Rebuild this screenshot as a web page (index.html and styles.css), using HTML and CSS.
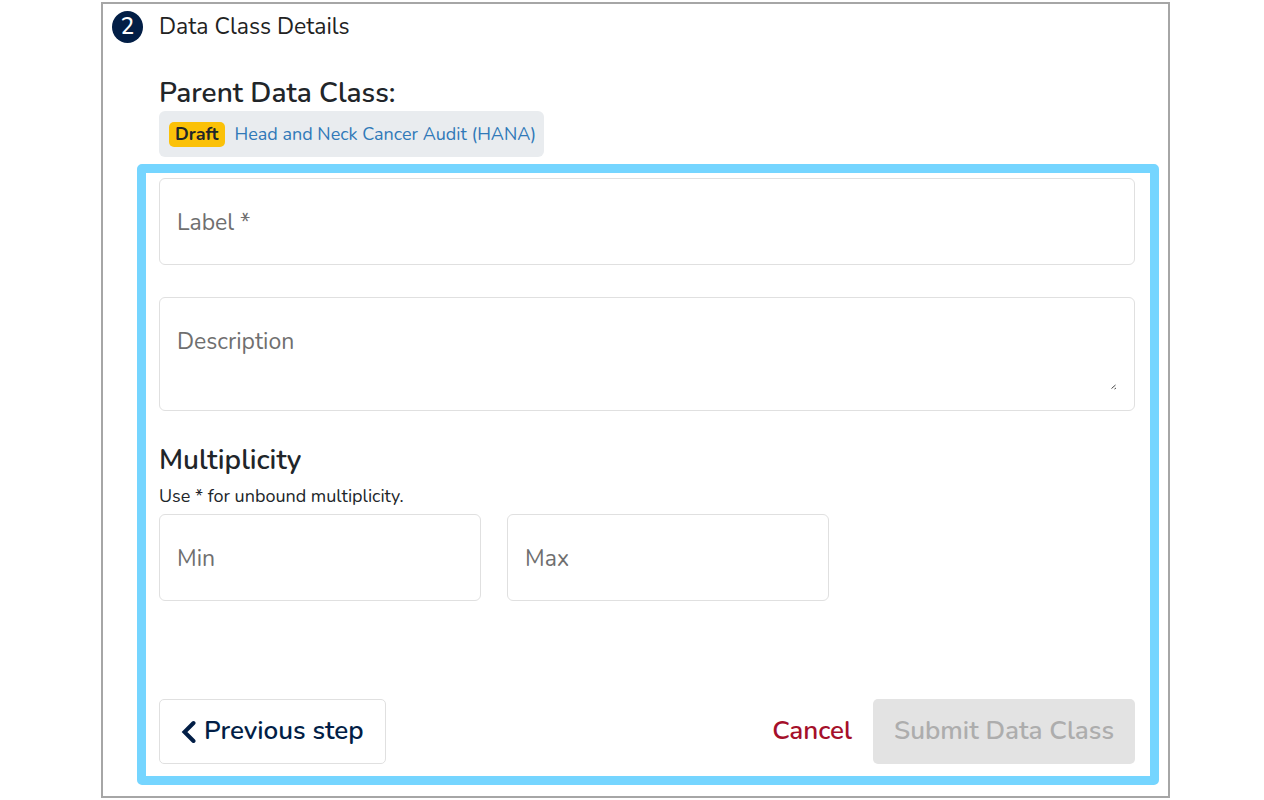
FILE: index.html
```html
<!DOCTYPE html>
<html lang="en">
<head>
<meta charset="utf-8">
<title>Data Class Details</title>
<link rel="stylesheet" href="styles.css">
</head>
<body>
<main class="panel">
  <header class="step">
    <span class="step-number">2</span>
    <h1 class="step-title">Data Class Details</h1>
  </header>
  <section class="parent">
    <h2 class="heading">Parent Data Class:</h2>
    <div class="parent-card">
      <span class="badge">Draft</span>
      <a class="parent-link" href="#">Head and Neck Cancer Audit (HANA)</a>
    </div>
  </section>
  <form class="details">
    <div class="field">
      <label class="field-label" for="label">Label *</label>
      <input class="field-input" id="label" type="text" required>
    </div>
    <div class="field field-area">
      <label class="field-label" for="description">Description</label>
      <textarea class="field-input" id="description" rows="2"></textarea>
      <svg class="grip" width="6" height="6" viewBox="0 0 6 6" aria-hidden="true"><path d="M.5 4.5 4.5 1M3.5 5l1.500-1" fill="none" stroke="#444" stroke-width="1"/></svg>
    </div>
    <h2 class="heading">Multiplicity</h2>
    <p class="hint">Use * for unbound multiplicity.</p>
    <div class="range">
      <div class="field">
        <label class="field-label" for="min">Min</label>
        <input class="field-input" id="min" type="text">
      </div>
      <div class="field">
        <label class="field-label" for="max">Max</label>
        <input class="field-input" id="max" type="text">
      </div>
    </div>
    <div class="actions">
      <button class="button previous" type="button">
        <svg width="15" height="24" viewBox="0 0 15 24" aria-hidden="true"><path d="M12.500 4 3.500 13l9 9" fill="none" stroke="currentColor" stroke-width="4" stroke-linejoin="miter" stroke-linecap="round"/></svg>
        Previous step
      </button>
      <button class="button cancel" type="button">Cancel</button>
      <button class="button submit" type="submit" disabled>Submit Data Class</button>
    </div>
  </form>
</main>
</body>
</html>
```
FILE: styles.css
```css
* { box-sizing: border-box; }
body {
  margin: 0;
  padding: 2px 94px 2px 101px;
  background: #fff;
  color: #212529;
  font-family: Nunito, Lato, "Open Sans", sans-serif;
}
.panel {
  padding: 7px 9px 11px 9px;
  border: 2px solid #a6a6a6;
}
.step {
  display: flex;
  align-items: center;
  gap: 16px;
}
.step-number {
  display: grid;
  place-items: center;
  width: 31px;
  height: 32px;
  border-radius: 50%;
  background: #021e46;
  color: #fff;
  font-size: 23px;
  font-weight: 500;
  line-height: 24px;
}
.step-title {
  margin: 0;
  color: #222;
  font-size: 23px;
  font-weight: 400;
  line-height: 32px;
}
.parent { padding: 32px 0 7px 47px; }
.heading {
  margin: 0;
  font-size: 28px;
  font-weight: 600;
  line-height: 36px;
}
.parent-card {
  display: inline-flex;
  align-items: center;
  gap: 10px;
  height: 46px;
  padding: 0 8px 0 10px;
  border-radius: 6px;
  background: #e9ecef;
  vertical-align: top;
}
.badge {
  padding: 0 6px;
  border-radius: 5px;
  background: #fbc108;
  font-size: 18px;
  font-weight: 700;
  line-height: 25px;
}
.parent-link {
  color: #3079b8;
  font-size: 18px;
  line-height: 24px;
  text-decoration: none;
}
.details {
  margin-left: 25px;
  padding: 5px 15px 12px 13px;
  border: 9px solid #75d5ff;
  border-radius: 5px;
}
.field {
  display: flex;
  align-items: center;
  gap: 12px;
  height: 87px;
  padding: 2px 17px 0;
  border: 1px solid #e0e0e0;
  border-radius: 6px;
}
.field-label {
  color: #6f6f6f;
  font-size: 23px;
  line-height: 32px;
}
.field-input {
  flex: 1;
  min-width: 0;
  padding: 0;
  border: 0;
  outline: 0;
  background: transparent;
  color: inherit;
  font: inherit;
  font-size: 23px;
  line-height: 32px;
  resize: none;
}
.field-area {
  align-items: flex-start;
  height: 114px;
  margin: 32px 0 31px;
  padding: 28px 17px 20px;
}
.grip { align-self: flex-end; }
.hint {
  margin: 5px 0;
  font-size: 18px;
  line-height: 26px;
}
.range {
  display: grid;
  grid-template-columns: 33% 33%;
  gap: 26px;
}
.actions {
  display: flex;
  margin-top: 98px;
}
.button {
  height: 65px;
  padding: 0 20px 2px;
  border: 1px solid transparent;
  border-radius: 5px;
  background: transparent;
  font-family: inherit;
  font-size: 26px;
  font-weight: 600;
  line-height: 32px;
}
.previous {
  display: flex;
  align-items: center;
  gap: 8px;
  margin-right: auto;
  padding: 0 21px 2px;
  border-color: #e0e0e0;
  color: #021e46;
}
.cancel { color: #a50f2a; }
.submit {
  background: #e3e3e3;
  color: #adadad;
}
```
